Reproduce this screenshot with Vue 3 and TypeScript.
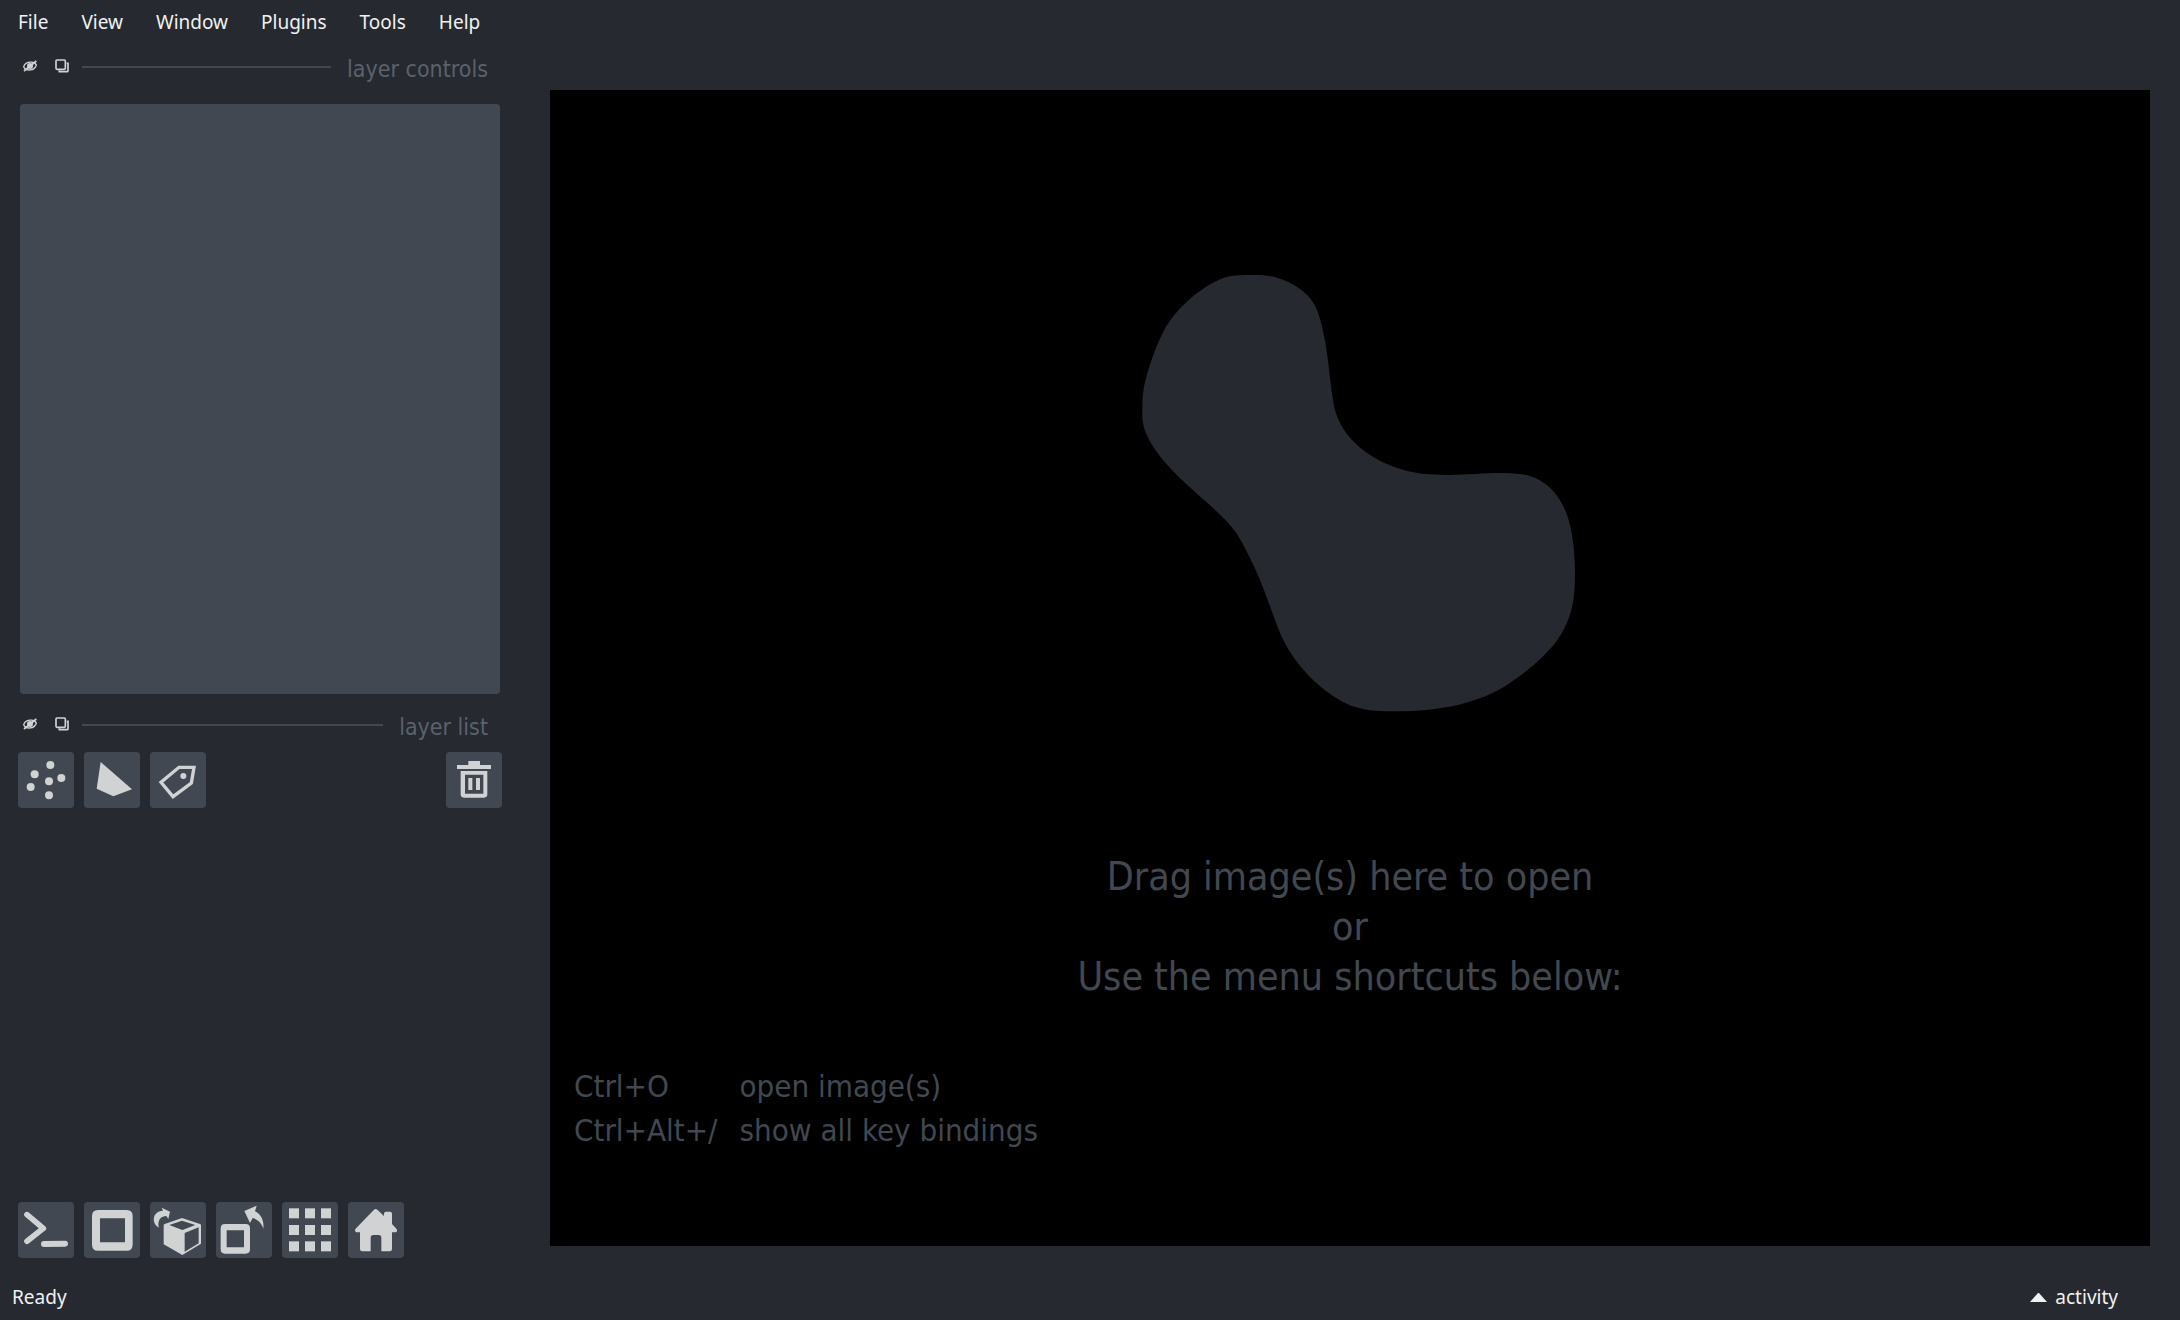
<script setup lang="ts">
interface Shortcut {
  keys: string
  action: string
}

const menus: string[] = ['File', 'View', 'Window', 'Plugins', 'Tools', 'Help']

const shortcuts: Shortcut[] = [
  { keys: 'Ctrl+O', action: 'open image(s)' },
  { keys: 'Ctrl+Alt+/', action: 'show all key bindings' },
]

const docks: string[] = ['layer controls', 'layer list']

const gridCols: number[] = [21, 69, 117]
const gridRows: number[] = [19, 69, 118]

const points: [number, number][] = [
  [97, 39],
  [50, 67],
  [130, 78],
  [93, 88],
  [38, 105],
  [93, 130],
]
</script>

<template>
  <div class="app">
    <nav class="menubar">
      <button v-for="m in menus" :key="m" type="button" class="menu">{{ m }}</button>
    </nav>

    <div class="main">
      <aside class="sidebar">
        <template v-for="(name, i) in docks" :key="name">
          <header class="dock-title" :class="i === 0 ? 'first' : 'second'">
            <button type="button" class="mini" aria-label="hide">
              <svg viewBox="0 0 42 42" fill="none" stroke="#d1d2d4">
                <path d="M2 23C7 8 33 4 40 18C35 36 9 38 2 23Z" stroke-width="4" />
                <circle cx="21" cy="21" r="9" fill="#d1d2d4" stroke="none" />
                <path d="M3 36L40 6" stroke-width="5" />
              </svg>
            </button>
            <button type="button" class="mini" aria-label="float">
              <svg viewBox="0 0 42 42" fill="none" stroke="#d1d2d4" stroke-width="5">
                <path d="M13 34V38H36Q39 38 39 35V13H35" />
                <rect x="3" y="3" width="28" height="28" rx="3" />
              </svg>
            </button>
            <span class="rule"></span>
            <h2>{{ name }}</h2>
          </header>
          <div v-if="i === 0" class="controls"></div>
        </template>

        <div class="tools">
          <button type="button" class="tool" aria-label="new points layer">
            <svg viewBox="0 0 168 168">
              <circle v-for="(p, k) in points" :key="k" :cx="p[0]" :cy="p[1]" r="12" />
            </svg>
          </button>
          <button type="button" class="tool" aria-label="new shapes layer">
            <svg viewBox="0 0 168 168"><path d="M50 30L144 112L88 133L38 110Z" /></svg>
          </button>
          <button type="button" class="tool" aria-label="new labels layer">
            <svg viewBox="0 0 168 168">
              <path d="M87 46H132L124 93L69 134L33 91Z" fill="none" stroke="#d1d2d4" stroke-width="10" />
              <circle cx="100" cy="72" r="9" />
            </svg>
          </button>
          <button type="button" class="tool trash" aria-label="delete layer">
            <svg viewBox="0 0 168 168">
              <path d="M33 39H67V27H102V39H135V51H33Z" />
              <path
                fill-rule="evenodd"
                d="M44 57H124V127Q124 137 114 137H54Q44 137 44 127ZM57 68V125H112V68Z"
              />
              <path d="M67 78H79V114H67ZM90 78H102V114H90Z" />
            </svg>
          </button>
        </div>

        <div class="layers"></div>

        <div class="tools">
          <button type="button" class="tool" aria-label="console">
            <svg viewBox="0 0 168 168" fill="none" class="stroked">
              <path d="M27 38L76 79L27 118" stroke-width="17" />
              <path d="M78 126L141 125" stroke-width="18" />
            </svg>
          </button>
          <button type="button" class="tool" aria-label="toggle 2D/3D view">
            <svg viewBox="0 0 168 168">
              <path
                fill-rule="evenodd"
                d="M42 24H128Q146 24 146 42V128Q146 146 128 146H42Q24 146 24 128V42Q24 24 42 24ZM48 49V121H123V49Z"
              />
            </svg>
          </button>
          <button type="button" class="tool" aria-label="roll dimensions">
            <svg viewBox="0 0 168 168">
              <path
                fill-rule="evenodd"
                d="M96 48L150 66Q153 67 153 70V125L97 159L41 127V70Q41 67 44 66ZM96 56L58 69L97 84L136 69ZM104 93V149L146 124V76Z"
              />
              <path d="M26 77C10 68 7 47 17 36C23 28 31 26 39 26L35 17L60 29L55 51L49 42C34 43 22 51 26 77Z" />
            </svg>
          </button>
          <button type="button" class="tool" aria-label="transpose dimensions">
            <svg viewBox="0 0 168 168">
              <path
                fill-rule="evenodd"
                d="M27 66H89Q102 66 102 79V142Q102 155 89 155H27Q14 155 14 142V79Q14 66 27 66ZM32 85V136H84V85Z"
              />
              <path d="M85 27L122 11L117 28C134 36 145 55 142 80C138 65 126 52 110 48L102 63Z" />
            </svg>
          </button>
          <button type="button" class="tool" aria-label="grid view">
            <svg viewBox="0 0 168 168">
              <template v-for="y in gridRows" :key="y">
                <rect v-for="x in gridCols" :key="x" :x="x" :y="y" width="30" height="30" />
              </template>
            </svg>
          </button>
          <button type="button" class="tool" aria-label="reset view">
            <svg viewBox="0 0 168 168">
              <path
                d="M78 23Q83 19 88 23L108 42V35Q108 29 114 29H126Q132 29 132 35V66L146 81Q149 86 145 91H132V141Q132 148 125 148H100V107Q100 99 92 99H76Q68 99 68 107V148H43Q36 148 36 141V91H24Q19 87 22 81Z"
              />
            </svg>
          </button>
        </div>
      </aside>

      <main class="canvas">
        <svg class="blob" viewBox="-30 0 1560 1440" aria-hidden="true">
          <path
            d="M455 75C500 75 522 77 560 94C610 118 640 146 655 190C685 285 686 375 700 455C718 585 860 665 990 673C1100 680 1170 663 1260 672C1340 681 1388 745 1406 810C1420 860 1425 920 1425 975C1425 1050 1415 1110 1370 1173C1335 1220 1280 1265 1225 1302C1140 1358 1030 1384 880 1384C830 1384 780 1380 740 1361C660 1322 585 1245 545 1160C510 1080 487 980 410 850C347 765 238 700 170 605C145 570 127 535 127 495C127 450 127 425 138 385C150 340 165 295 190 245C225 177 305 108 370 84C395 75 420 75 455 75Z"
          />
        </svg>
        <p class="hint">
          Drag image(s) here to open<br />or<br />Use the menu shortcuts below:
        </p>
        <table class="shortcuts">
          <tbody>
            <tr v-for="s in shortcuts" :key="s.keys">
              <th scope="row">{{ s.keys }}</th>
              <td>{{ s.action }}</td>
            </tr>
          </tbody>
        </table>
      </main>
    </div>

    <footer class="status">
      <span>Ready</span>
      <button type="button" class="activity">
        <svg viewBox="0 0 17 9" aria-hidden="true"><path d="M8 0H9L17 9H0Z" /></svg>
        activity
      </button>
    </footer>
  </div>
</template>

<style>
body {
  margin: 0;
  background: #262930;
}
</style>

<style scoped>
.app {
  box-sizing: border-box;
  display: flex;
  flex-direction: column;
  min-height: 100vh;
  background: #262930;
  color: #f0f1f2;
  font: 19px/26px 'Noto Sans', 'Open Sans', sans-serif;
}

button {
  padding: 0;
  border: 0;
  background: none;
  color: inherit;
  font: inherit;
}

svg {
  display: block;
}

.menubar {
  display: flex;
  gap: 1px;
  height: 44px;
  padding-left: 2px;
}

.menu {
  padding: 0 16px;
}

.main {
  display: flex;
  flex: 1;
}

.sidebar {
  display: flex;
  flex-direction: column;
  box-sizing: border-box;
  width: 520px;
  flex: none;
  padding: 0 18px 14px;
}

.dock-title {
  display: flex;
  align-items: center;
  height: 32px;
  padding: 0 14px 0 5px;
}

.first {
  margin: 7px 0 21px;
}

.second {
  margin: 15px 0 11px;
}

.mini {
  width: 14px;
  margin: 0 18px 2px 0;
}

.mini + .mini {
  margin-right: 13px;
}

.rule {
  flex: 1;
  height: 2px;
  background: #414851;
}

h2 {
  margin: 0 0 0 16px;
  padding-top: 4px;
  color: #5a626c;
  font: 23px/28px 'DejaVu Sans Condensed', 'DejaVu Sans', sans-serif;
  font-stretch: condensed;
}

.controls {
  flex: 3 1 0;
  margin: 0 2px;
  border-radius: 4px;
  background: #414851;
}

.layers {
  flex: 2 1 0;
}

.tools {
  display: flex;
  gap: 10px;
}

.tool {
  width: 56px;
  height: 56px;
  border-radius: 4px;
  background: #414851;
  fill: #d1d2d4;
}

.trash {
  margin-left: auto;
}

.stroked {
  fill: none;
  stroke: #d1d2d4;
  stroke-linecap: round;
  stroke-linejoin: round;
}

.canvas {
  display: flex;
  flex: 1;
  flex-direction: column;
  align-items: center;
  box-sizing: border-box;
  margin: 46px 30px 26px;
  padding: 160px 24px 94px;
  background: #000;
  color: #414851;
  font-family: 'DejaVu Sans Condensed', 'DejaVu Sans', sans-serif;
}

.blob {
  width: 520px;
  height: 480px;
  fill: #262930;
}

.hint {
  margin: 122px 0 48px;
  font-size: 39px;
  line-height: 50px;
  text-align: center;
}

.shortcuts {
  align-self: flex-start;
  margin-top: auto;
  border-collapse: collapse;
  font-size: 31px;
  line-height: 44px;
}

th,
td {
  padding: 0;
  font-weight: 400;
  text-align: left;
}

th {
  padding-right: 22px;
}

.status {
  display: flex;
  align-items: center;
  justify-content: space-between;
  height: 48px;
  padding: 2px 62px 0 12px;
  box-sizing: border-box;
}

.activity {
  display: flex;
  align-items: center;
  gap: 8px;
}

.activity svg {
  width: 17px;
  height: 9px;
  fill: #f0f1f2;
}
</style>
